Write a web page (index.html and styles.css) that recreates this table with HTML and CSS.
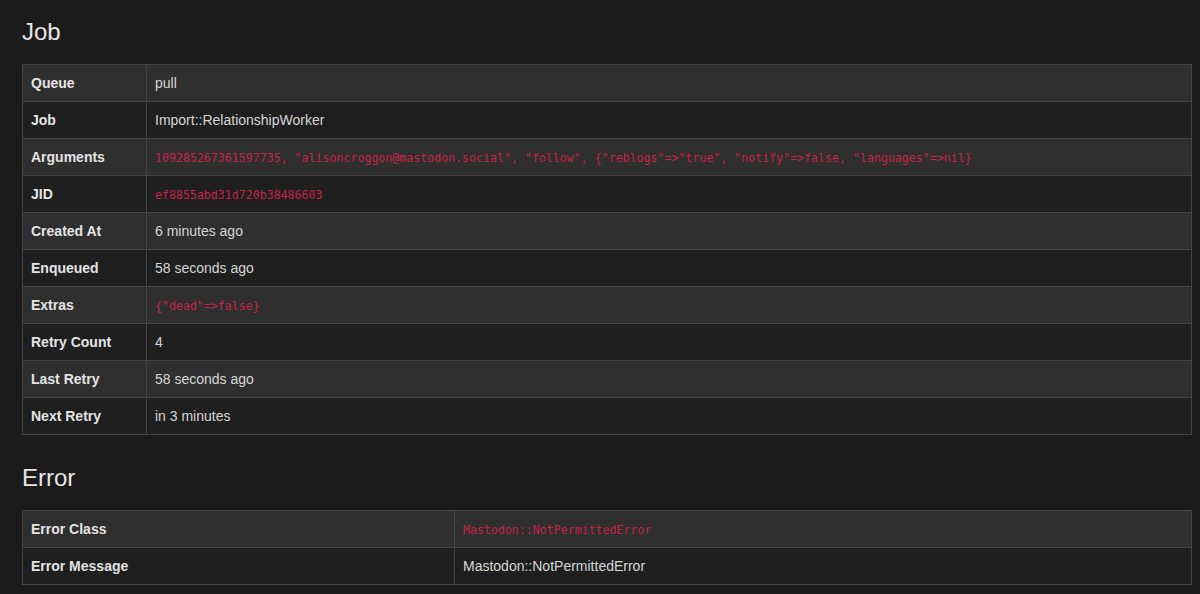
FILE: index.html
```html
<!DOCTYPE html>
<html>
<head>
<meta charset="utf-8">
<link rel="stylesheet" href="styles.css">
</head>
<body>
<div class="page">
  <h3 class="heading">Job</h3>
  <table class="info job">
    <tbody>
      <tr><th>Queue</th><td>pull</td></tr>
      <tr><th>Job</th><td>Import::RelationshipWorker</td></tr>
      <tr><th>Arguments</th><td><code>109285267361597735, "alisoncroggon@mastodon.social", "follow", {"reblogs"=&gt;"true", "notify"=&gt;false, "languages"=&gt;nil}</code></td></tr>
      <tr><th>JID</th><td><code>ef8855abd31d720b38486603</code></td></tr>
      <tr><th>Created At</th><td>6 minutes ago</td></tr>
      <tr><th>Enqueued</th><td>58 seconds ago</td></tr>
      <tr><th>Extras</th><td><code>{"dead"=&gt;false}</code></td></tr>
      <tr><th>Retry Count</th><td>4</td></tr>
      <tr><th>Last Retry</th><td>58 seconds ago</td></tr>
      <tr><th>Next Retry</th><td>in 3 minutes</td></tr>
    </tbody>
  </table>
  <h3 class="heading">Error</h3>
  <table class="info error">
    <tbody>
      <tr><th>Error Class</th><td><code>Mastodon::NotPermittedError</code></td></tr>
      <tr><th>Error Message</th><td>Mastodon::NotPermittedError</td></tr>
    </tbody>
  </table>
</div>
</body>
</html>
```

FILE: styles.css
```css
html, body {
  margin: 0;
  padding: 0;
  background: #1b1b1b;
  color: #d4d4d4;
  font-family: "Liberation Sans", Arial, sans-serif;
  font-size: 14px;
  line-height: 20px;
}

.page {
  padding: 19px 8px 0 22px;
  width: 1170px;
}

.heading {
  margin: 0 0 19px;
  font-size: 24px;
  line-height: 26px;
  font-weight: 400;
  color: #e6e6e6;
}

.info {
  width: 1170px;
  border-collapse: collapse;
  table-layout: fixed;
  margin-bottom: 30px;
  border: 1px solid #464646;
}

.info th,
.info td {
  padding: 8px;
  height: 20px;
  line-height: 20px;
  border: 1px solid #464646;
  text-align: left;
  vertical-align: top;
}

.info th {
  font-weight: 700;
  color: #e4e4e4;
}

.info td {
  color: #d6d6d6;
}

.info tr:nth-child(odd) {
  background: #2f2f2f;
}

.info tr:nth-child(even) {
  background: #1f1f1f;
}

.job th {
  width: 107px;
}

.error th {
  width: 415px;
}

.info code {
  display: inline-block;
  height: 20px;
  line-height: 22px;
  vertical-align: top;
  font-family: "DejaVu Sans Mono", "Liberation Mono", monospace;
  font-size: 11.6px;
  color: #c7254e;
  background: transparent;
  padding: 0;
  white-space: nowrap;
}
```
